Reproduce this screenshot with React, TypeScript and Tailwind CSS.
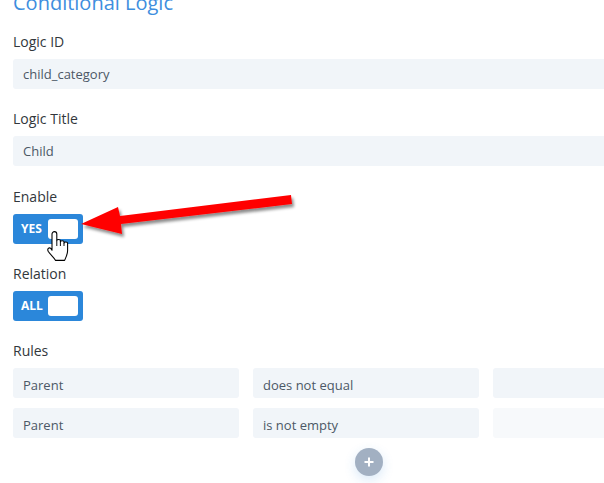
import React from "react";

const font = { fontFamily: '"Open Sans", "Liberation Sans", sans-serif' };

function Label({ children }: { children: React.ReactNode }) {
  return (
    <div className="text-[14px] leading-[18px] font-medium text-[#32373c] mb-[8px]">
      {children}
    </div>
  );
}

function Input({ value, light, low }: { value?: string; light?: boolean; low?: boolean }) {
  return (
    <div
      className={`h-[30px] rounded-[3px] flex items-center pl-[10px] text-[13px] text-[#4c5866] ${
        low ? "pt-[6px]" : "pt-[1px]"
      } ${light ? "bg-[#f7f9fb]" : "bg-[#f1f5f9]"}`}
    >
      {value}
    </div>
  );
}

function Toggle({ text }: { text: string }) {
  return (
    <div className="w-[70px] h-[30px] rounded-[3px] bg-[#2b87da] flex items-center justify-between pl-[8px] pr-[5px]">
      <span className="text-[12px] font-bold text-white leading-none">{text}</span>
      <span className="w-[30px] h-[20px] rounded-[3px] bg-white" />
    </div>
  );
}

export default function App() {
  return (
    <div className="relative w-[604px] h-[483px] overflow-hidden bg-white" style={font}>
      <div className="w-[732px] px-[13px] flex flex-col">
        <div className="mt-[-9px] text-[20px] leading-[24px] text-[#3e8ede]">Conditional Logic</div>

        <div className="mt-[18px]">
          <Label>Logic ID</Label>
          <Input value="child_category" />
        </div>

        <div className="mt-[21px]">
          <Label>Logic Title</Label>
          <Input value="Child" />
        </div>

        <div className="mt-[22px]">
          <Label>Enable</Label>
          <Toggle text="YES" />
        </div>

        <div className="mt-[21px]">
          <Label>Relation</Label>
          <Toggle text="ALL" />
        </div>

        <div className="mt-[21px]">
          <Label>Rules</Label>
          <div className="grid grid-cols-3 gap-x-[14px] gap-y-[10px]">
            <Input value="Parent" low />
            <Input value="does not equal" low />
            <Input low />
            <Input value="Parent" low />
            <Input value="is not empty" low />
            <Input light low />
          </div>
          <div className="mt-[10px] ml-[342px] w-[28px] h-[28px] rounded-full bg-[#a2b0c2] flex items-center justify-center shadow-[0_4px_12px_rgba(43,135,218,0.18)]">
            <svg width="12" height="12" viewBox="0 0 12 12">
              <path d="M6 1.5v9M1.5 6h9" stroke="white" strokeWidth="2" strokeLinecap="butt" />
            </svg>
          </div>
        </div>
      </div>

      {/* red arrow annotation */}
      <svg className="absolute top-0 left-0 pointer-events-none" width="604" height="483">
        <defs>
          <filter id="sh" x="-20%" y="-50%" width="140%" height="200%">
            <feDropShadow dx="2" dy="3" stdDeviation="1.5" floodColor="#000" floodOpacity="0.45" />
          </filter>
        </defs>
        <polygon
          points="81,224 118,207 120,216 291,195 292,204 121,224 122,234"
          fill="#ff0000"
          filter="url(#sh)"
        />
      </svg>

      {/* hand cursor */}
      <svg className="absolute pointer-events-none" style={{ left: 46, top: 230 }} width="24" height="32" viewBox="0 0 20 26">
        <path
          d="M7,1 C8,1 9,2 9,3 L9,8.5 C9,7.3 12,7.3 12,8.5 L12,9.5 C12,8.3 15,8.3 15,9.5 L15,10.5 C15,9.3 18,9.3 18,10.5 L18,17 C18,20 16.5,22.5 15.5,25 L8,25 C7,23 3,19.5 1.8,17.3 C0.8,15.3 2.5,13.8 4,15 L5,16.5 L5,3 C5,2 6,1 7,1 Z"
          fill="white"
          stroke="#000"
          strokeWidth="0.9"
          strokeLinejoin="round"
        />
        <path d="M9,8.5 L9,13 M12,9.5 L12,13 M15,10.5 L15,13" stroke="#000" strokeWidth="0.8" fill="none" />
      </svg>
    </div>
  );
}
